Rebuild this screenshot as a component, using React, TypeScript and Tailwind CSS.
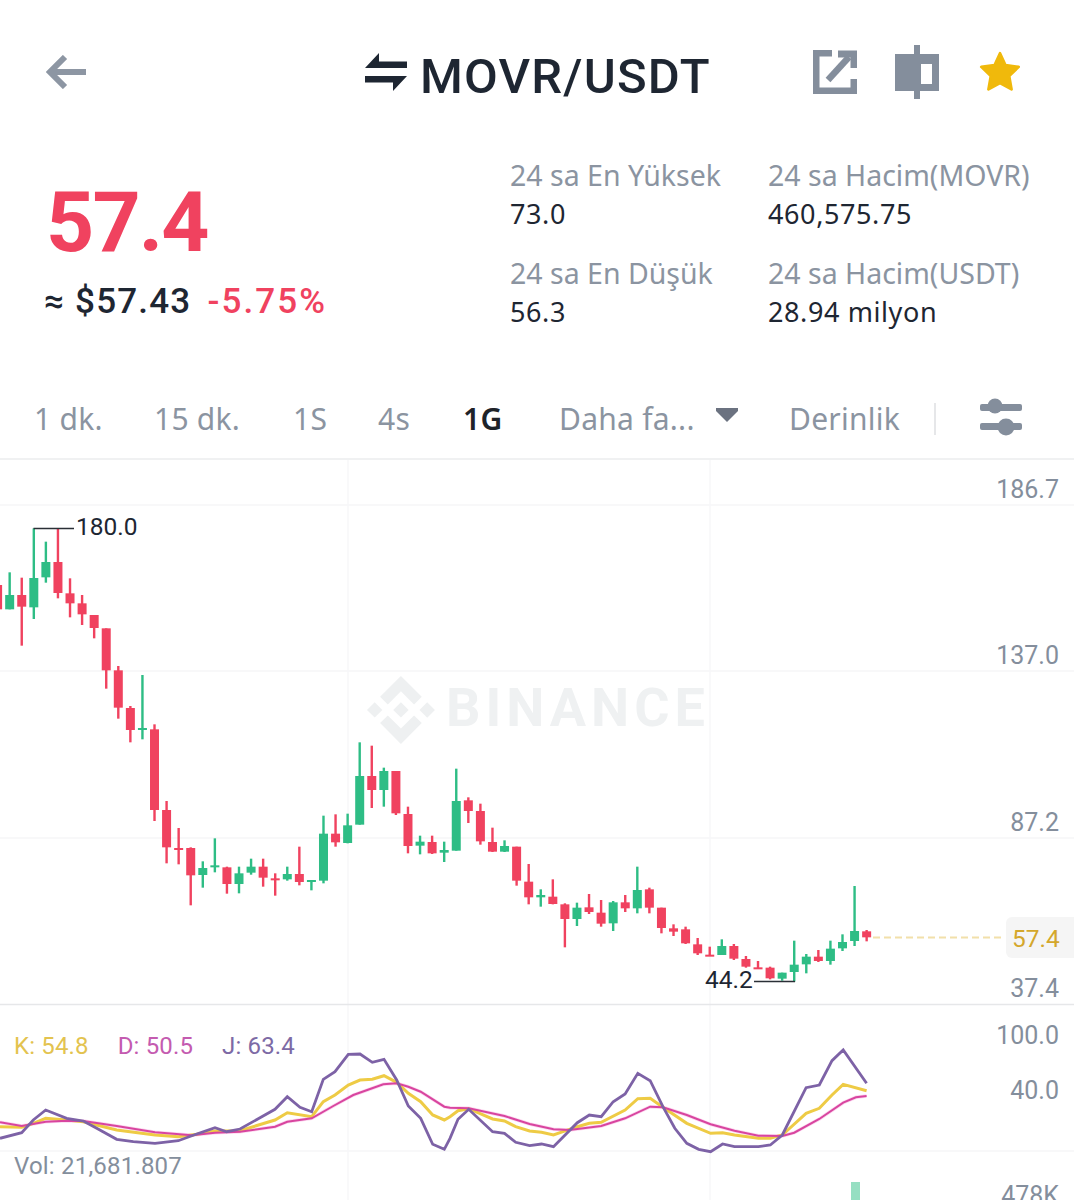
import type { ReactNode } from 'react';

type Candle = [number, number, number, number, number];

const UP = '#2ebd85';
const DOWN = '#f0425f';

// [index, high, bodyTop, bodyBottom, low], y read at 3x from the given base
const candleGroups: { base: number; up: number[]; rows: Candle[] }[] = [
  {
    base: 500,
    up: [0, 2, 3, 11, 16, 17, 19, 20, 23, 25, 26, 28],
    rows: [
      [-1, 255, 255, 328, 328],
      [0, 217, 285, 328, 328],
      [1, 233, 285, 320, 437],
      [2, 85, 234, 322, 357],
      [3, 125, 186, 232, 248],
      [4, 85, 186, 279, 295],
      [5, 235, 280, 310, 352],
      [6, 285, 310, 343, 375],
      [7, 345, 345, 384, 415],
      [8, 385, 385, 511, 566],
      [9, 498, 511, 623, 656],
      [10, 618, 624, 690, 727],
      [11, 525, 684, 690, 718],
      [12, 673, 688, 930, 963],
      [13, 903, 930, 1042, 1090],
      [14, 984, 1044, 1050, 1093],
      [15, 1042, 1044, 1126, 1216],
      [16, 1084, 1104, 1125, 1163],
      [17, 1015, 1096, 1102, 1117],
      [18, 1100, 1102, 1152, 1181],
      [19, 1100, 1120, 1152, 1180],
      [20, 1076, 1100, 1118, 1124],
      [21, 1076, 1100, 1133, 1160],
      [22, 1120, 1135, 1140, 1187],
      [23, 1100, 1122, 1138, 1142],
      [24, 1040, 1122, 1146, 1156],
      [25, 1140, 1140, 1144, 1171],
      [26, 947, 1001, 1142, 1150],
      [27, 943, 1001, 1027, 1040],
      [28, 941, 976, 1029, 1030],
    ],
  },
  {
    base: 660,
    up: [29, 31, 34, 36, 37, 41, 44, 47, 50, 52],
    rows: [
      [29, 247, 348, 494, 494],
      [30, 257, 348, 390, 444],
      [31, 323, 333, 390, 440],
      [32, 333, 333, 460, 465],
      [33, 440, 462, 558, 580],
      [34, 527, 545, 557, 583],
      [35, 527, 546, 580, 582],
      [36, 545, 570, 578, 606],
      [37, 326, 423, 572, 572],
      [38, 412, 421, 453, 489],
      [39, 431, 453, 544, 554],
      [40, 503, 546, 575, 576],
      [41, 541, 558, 575, 576],
      [42, 560, 560, 662, 677],
      [43, 612, 665, 712, 733],
      [44, 688, 705, 712, 740],
      [45, 658, 710, 732, 733],
      [46, 730, 733, 777, 862],
      [47, 728, 743, 777, 798],
      [48, 702, 742, 756, 762],
      [49, 720, 758, 791, 800],
      [50, 723, 727, 790, 813],
      [51, 705, 727, 745, 756],
      [52, 620, 690, 745, 760],
      [53, 683, 688, 743, 760],
      [54, 743, 743, 804, 820],
      [55, 793, 805, 815, 828],
      [56, 800, 808, 850, 852],
    ],
  },
  {
    base: 860,
    up: [59, 64, 65, 66, 68, 69, 70],
    rows: [
      [57, 234, 253, 280, 285],
      [58, 260, 284, 288, 288],
      [59, 238, 258, 285, 285],
      [60, 252, 258, 296, 300],
      [61, 288, 297, 320, 323],
      [62, 303, 322, 327, 327],
      [63, 320, 323, 355, 358],
      [64, 338, 338, 356, 362],
      [65, 242, 314, 336, 365],
      [66, 282, 290, 313, 340],
      [67, 270, 290, 303, 306],
      [68, 242, 266, 303, 314],
      [69, 223, 246, 265, 273],
      [70, 78, 213, 243, 258],
      [71, 210, 214, 232, 244],
    ],
  },
];

const jLeft = [[0,355],[65,338],[100,300],[137,270],[200,295],[250,303],[290,325],[350,358],[400,365],[465,370],[535,362],[590,342],[645,323],[680,335],[720,327],[825,268],[862,230],[900,262],[935,275],[970,178],[1005,155],[1045,103],[1080,102],[1117,127],[1152,118],[1190,180],[1225,258],[1262,295],[1298,373],[1333,388]];
const jRight = [[0,355],[20,298],[47,268],[107,335],[137,340],[165,367],[200,377],[230,372],[260,380],[320,308],[350,285],[380,290],[410,245],[440,222],[472,160],[503,182],[535,260],[565,325],[595,370],[625,388],[655,395],[685,372],[715,380],[775,380],[805,375],[835,345],[895,203],[928,195],[960,122],[988,90],[1047,190]];
const kLeft = [[0,320],[65,322],[100,310],[137,295],[200,300],[250,305],[350,330],[465,345],[535,350],[590,343],[645,333],[720,332],[825,300],[862,278],[935,290],[970,245],[1005,225],[1045,195],[1080,180],[1117,178],[1152,167],[1190,187],[1225,220],[1262,245],[1298,285],[1333,300]];
const kRight = [[0,290],[20,272],[47,266],[107,297],[137,303],[165,320],[200,333],[230,337],[260,345],[320,320],[350,310],[380,307],[440,270],[472,236],[503,235],[535,262],[595,310],[655,340],[685,338],[715,345],[775,355],[805,355],[835,345],[895,280],[928,265],[960,225],[988,193],[1047,212]];
const dLeft = [[0,307],[65,318],[137,305],[200,302],[250,303],[350,318],[465,337],[575,346],[645,338],[720,335],[825,320],[862,305],[935,295],[1000,258],[1060,225],[1150,193],[1190,190],[1225,200],[1262,215],[1333,260]];
const dRight = [[0,263],[47,265],[137,288],[200,312],[260,328],[300,330],[380,318],[440,295],[503,260],[535,262],[595,285],[655,313],[715,332],[775,347],[835,348],[865,338],[928,297],[988,248],[1020,232],[1047,228]];

function linePoints(left: number[][], right: number[][]) {
  const a = left.map(([x, y]) => `${(x / 3).toFixed(1)},${(1020 + y / 3).toFixed(1)}`);
  const b = right.map(([x, y]) => `${(450 + x / 2.513).toFixed(1)},${(1020 + y / 3).toFixed(1)}`);
  return [...a, ...b].join(' ');
}

function Candles() {
  return (
    <>
      {candleGroups.flatMap((group) =>
        group.rows.map(([i, high, top, bottom, low]) => {
          const x = 9.67 + 12.07 * i;
          const color = group.up.includes(i) ? UP : DOWN;
          const y1 = group.base + top / 3;
          const h = Math.max((bottom - top) / 3, 2);
          return (
            <g key={i} fill={color}>
              <rect x={x - 1.2} y={group.base + high / 3} width={2.4} height={(low - high) / 3} />
              <rect x={x - 4.5} y={y1} width={9} height={h} />
            </g>
          );
        }),
      )}
    </>
  );
}

function ChartSvg() {
  const hLines = [505, 671, 838, 1151];
  return (
    <svg className="block" width="1074" height="740" viewBox="0 460 1074 740">
      {hLines.map((y) => (
        <line key={y} x1="0" x2="1074" y1={y} y2={y} stroke="#f6f6f7" strokeWidth="1.5" />
      ))}
      <line x1="348" x2="348" y1="460" y2="1200" stroke="#f7f7f8" strokeWidth="1.5" />
      <line x1="710" x2="710" y1="460" y2="1200" stroke="#f7f7f8" strokeWidth="1.5" />
      <line x1="0" x2="1074" y1="1004.5" y2="1004.5" stroke="#e6e7e9" strokeWidth="1.5" />

      <g transform="translate(367 676) scale(2.83)" fill="#eef0f1">
        <path d="M16.624 13.9202l2.7175 2.7154-7.353 7.353-7.353-7.352 2.7175-2.7164 4.6355 4.6595 4.6356-4.6595zm4.6366-4.6366L24 12l-2.7154 2.7164L18.5682 12l2.6924-2.7164zm-9.272.001l2.7163 2.6914-2.7164 2.7174v-.001L9.2721 12l2.7164-2.7154zm-9.2722-.001L5.4088 12l-2.6914 2.6924L0 12l2.7164-2.7164zM11.9885.0115l7.353 7.329-2.7174 2.7154-4.6356-4.6356-4.6355 4.6595-2.7174-2.7154 7.353-7.353z" />
      </g>

      <Candles />

      <path d="M33.5 528.5H74" stroke="#2a2f36" strokeWidth="1.5" fill="none" />
      <path d="M754 981.5H795" stroke="#2a2f36" strokeWidth="1.5" fill="none" />
      <line x1="873" x2="1004" y1="937.5" y2="937.5" stroke="#f2e0aa" strokeWidth="2" strokeDasharray="7 4" />

      <polyline points={linePoints(dLeft, dRight)} fill="none" stroke="#fcd7f0" strokeWidth="3.5" />
      <polyline points={linePoints(kLeft, kRight)} fill="none" stroke="#eecb45" strokeWidth="3" />
      <polyline points={linePoints(dLeft, dRight)} fill="none" stroke="#d8459f" strokeWidth="2" />
      <polyline points={linePoints(jLeft, jRight)} fill="none" stroke="#7d62a6" strokeWidth="2.8" />

      <rect x="851" y="1182" width="9" height="18" fill="#96dfc2" />
    </svg>
  );
}

function BackArrow() {
  return (
    <svg width="40" height="34" viewBox="0 0 40 34" fill="none" stroke="#8d96a3" strokeWidth="6">
      <path d="M19 2 4 17l15 15" />
      <path d="M4 17h36" />
    </svg>
  );
}

function SwapIcon() {
  return (
    <svg width="43" height="39" viewBox="365 52 43 39" fill="#1e2632">
      <path d="M379 52 365 67H407V60.5H379Z" />
      <path d="M365 75H407L393 90V81.500H365Z" />
    </svg>
  );
}

function ShareIcon() {
  return (
    <svg width="44" height="44" viewBox="0 0 44 44" fill="none" stroke="#848e9c" strokeWidth="6">
      <path d="M19 3H3v38h38V29" strokeWidth="7" />
      <path d="M15 30 36 7" strokeWidth="6.5" />
      <path d="M25 4h16v14" strokeWidth="7" />
    </svg>
  );
}

function CandleIcon() {
  return (
    <svg width="44" height="54" viewBox="0 0 44 54">
      <rect x="19" width="6" height="54" fill="#848e9c" />
      <rect y="9" width="44" height="37" fill="#848e9c" />
      <rect x="26" y="19" width="11" height="20" fill="#fff" />
    </svg>
  );
}

function StarIcon() {
  return (
    <svg width="44" height="44" viewBox="0 0 24 24" fill="#f0b90b" stroke="#f0b90b" strokeWidth="1.5" strokeLinejoin="round">
      <path d="M12 1.8 15 8.300 22.200 9.200 17 14.200 18.300 21.500 12 18 5.700 21.500 7 14.200 1.800 9.200 9 8.300Z" />
    </svg>
  );
}

function SliderIcon() {
  return (
    <svg width="44" height="40" viewBox="0 0 44 40" fill="#848e9c">
      <rect x="1" y="6" width="42" height="7" rx="2" />
      <circle cx="16" cy="8" r="7.500" />
      <rect x="1" y="25" width="42" height="7" rx="2" />
      <circle cx="27" cy="29" r="8.500" />
    </svg>
  );
}

function Stat({ label, value }: { label: string; value: string }) {
  return (
    <div>
      <p className="text-[28.5px] leading-[38px] text-[#8b94a1]">{label}</p>
      <p className="mt-[1px] text-[27px] leading-[38px] tracking-[0.6px] text-[#1e2632]">{value}</p>
    </div>
  );
}

function Tab({ children, active, className }: { children: ReactNode; active?: boolean; className: string }) {
  return (
    <span className={`${className} text-[30px] leading-none tracking-[0.25px] ${active ? 'font-semibold text-[#1e2329]' : 'text-[#8b94a1]'}`}>
      {children}
    </span>
  );
}

function AxisLabel({ y, children, className = 'text-[#848e9c]' }: { y: string; children: ReactNode; className?: string }) {
  return <span className={`absolute right-[15px] text-[25px] leading-[30px] ${y} ${className}`}>{children}</span>;
}

export default function App() {
  return (
    <div className="w-[1074px] h-[1200px] overflow-hidden bg-white font-['Noto_Sans',sans-serif]">
      <header className="flex items-center pt-[14px] pl-[46px] h-[130px]">
        <BackArrow />
        <div className="flex items-center ml-[279px] gap-[12px]">
          <SwapIcon />
          <h1 className="font-['Roboto',sans-serif] font-medium text-[49px] leading-none tracking-[1.2px] text-[#1e2632] mt-[8px]">
            MOVR/USDT
          </h1>
        </div>
        <div className="flex items-center ml-[102px]">
          <ShareIcon />
          <div className="ml-[38px]"><CandleIcon /></div>
          <div className="ml-[39px]"><StarIcon /></div>
        </div>
      </header>

      <section className="flex h-[250px] pt-[26px]">
        <div className="w-[510px] pl-[46px] pt-[22px]">
          <p className="font-['Roboto',sans-serif] font-bold text-[84px] leading-[90px] tracking-[-1.8px] text-[#f0425f]">57.4</p>
          <p className="flex items-baseline mt-[12px] -ml-[2px] text-[35px] leading-[44px]">
            <span className="font-['Roboto',sans-serif] font-medium tracking-[1.2px] text-[#1e2632]">≈ $57.43</span>
            <span className="font-['Roboto',sans-serif] font-medium tracking-[2.1px] ml-[16px] text-[#f0425f]">-5.75%</span>
          </p>
        </div>
        <div className="grid grid-cols-[258px_1fr] gap-y-[21px] content-start">
          <Stat label="24 sa En Yüksek" value="73.0" />
          <Stat label="24 sa Hacim(MOVR)" value="460,575.75" />
          <Stat label="24 sa En Düşük" value="56.3" />
          <Stat label="24 sa Hacim(USDT)" value="28.94 milyon" />
        </div>
      </section>

      <nav className="flex items-center h-[80px] pl-[34px] border-b-2 border-[#f0f1f2]">
        <Tab className="w-[120px]">1 dk.</Tab>
        <Tab className="w-[139px]">15 dk.</Tab>
        <Tab className="w-[85px]">1S</Tab>
        <Tab className="w-[85px]">4s</Tab>
        <Tab active className="w-[96px]">1G</Tab>
        <Tab className="w-[157px]">Daha fa...</Tab>
        <svg width="22" height="14" viewBox="0 0 22 14" fill="#6b7280" className="-mt-[8px]"><path d="M0 0h22v3l-11 11L0 3Z" /></svg>
        <Tab className="w-[145px] ml-[51px]">Derinlik</Tab>
        <span className="w-[2px] h-[32px] bg-[#e6e7e9]" />
        <div className="ml-[43px] -mt-[3px]"><SliderIcon /></div>
      </nav>

      <main className="relative h-[740px] overflow-hidden font-['Roboto',sans-serif]">
        <ChartSvg />
        <span className="absolute left-[446px] top-[218px] font-bold text-[54px] leading-[60px] tracking-[5px] text-[#eff1f2]">BINANCE</span>
        <span className="absolute left-[76px] top-[52px] text-[24.5px] leading-[30px] text-[#1e2632]">180.0</span>
        <span className="absolute left-[705px] top-[505px] text-[24.5px] leading-[30px] text-[#1e2632]">44.2</span>
        <AxisLabel y="top-[15px]">186.7</AxisLabel>
        <AxisLabel y="top-[181px]">137.0</AxisLabel>
        <AxisLabel y="top-[348px]">87.2</AxisLabel>
        <span className="absolute right-0 top-[457px] w-[68px] h-[41px] rounded-l-[6px] bg-[#f5f5f5] pl-[6px] text-[24.5px] leading-[43px] text-[#d4a72c]">57.4</span>
        <AxisLabel y="top-[514px]">37.4</AxisLabel>
        <AxisLabel y="top-[561px]">100.0</AxisLabel>
        <AxisLabel y="top-[616px]">40.0</AxisLabel>
        <AxisLabel y="top-[721px]">478K</AxisLabel>
        <div className="absolute left-[14px] top-[571px] flex gap-[29px] text-[24px] leading-[30px] tracking-[0.15px]">
          <span className="text-[#e3c34f]">K: 54.8</span>
          <span className="text-[#c45bb0]">D: 50.5</span>
          <span className="text-[#7d6aa5]">J: 63.4</span>
        </div>
        <span className="absolute left-[14px] top-[691px] text-[24px] leading-[30px] tracking-[0.2px] text-[#848e9c]">Vol: 21,681.807</span>
      </main>
    </div>
  );
}
